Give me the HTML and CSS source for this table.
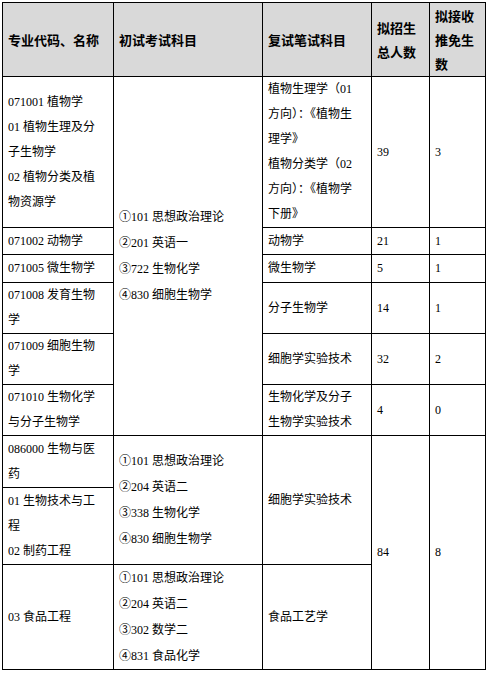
FILE: index.html
```html
<!DOCTYPE html>
<html lang="zh-CN">
<head>
<meta charset="utf-8">
<title>招生目录</title>
<link rel="stylesheet" href="styles.css">
</head>
<body>
<div class="wrap">
<table class="plan">
  <colgroup>
    <col class="c1"><col class="c2"><col class="c3"><col class="c4"><col class="c5">
  </colgroup>
  <thead>
    <tr class="rh">
      <th>专业代码、名称</th>
      <th>初试考试科目</th>
      <th>复试笔试科目</th>
      <th>拟招生<br>总人数</th>
      <th>拟接收<br>推免生<br>数</th>
    </tr>
  </thead>
  <tbody>
    <tr class="r1">
      <td>071001 植物学<br>01 植物生理及分<br>子生物学<br>02 植物分类及植<br>物资源学</td>
      <td rowspan="6" class="exam">①101 思想政治理论<br>②201 英语一<br>③722 生物化学<br>④830 细胞生物学</td>
      <td>植物生理学（01<br>方向）：《植物生<br>理学》<br>植物分类学（02<br>方向）：《植物学<br>下册》</td>
      <td>39</td>
      <td>3</td>
    </tr>
    <tr class="r2">
      <td>071002 动物学</td>
      <td>动物学</td>
      <td>21</td>
      <td>1</td>
    </tr>
    <tr class="r3">
      <td>071005 微生物学</td>
      <td>微生物学</td>
      <td>5</td>
      <td>1</td>
    </tr>
    <tr class="r4">
      <td>071008 发育生物<br>学</td>
      <td>分子生物学</td>
      <td>14</td>
      <td>1</td>
    </tr>
    <tr class="r5">
      <td>071009 细胞生物<br>学</td>
      <td>细胞学实验技术</td>
      <td>32</td>
      <td>2</td>
    </tr>
    <tr class="r6">
      <td>071010 生物化学<br>与分子生物学</td>
      <td>生物化学及分子<br>生物学实验技术</td>
      <td>4</td>
      <td>0</td>
    </tr>
    <tr class="r7">
      <td>086000 生物与医<br>药</td>
      <td rowspan="2" class="exam">①101 思想政治理论<br>②204 英语二<br>③338 生物化学<br>④830 细胞生物学</td>
      <td rowspan="2">细胞学实验技术</td>
      <td rowspan="3">84</td>
      <td rowspan="3">8</td>
    </tr>
    <tr class="r8">
      <td>01 生物技术与工<br>程<br>02 制药工程</td>
    </tr>
    <tr class="r9">
      <td>03 食品工程</td>
      <td class="exam">①101 思想政治理论<br>②204 英语二<br>③302 数学二<br>④831 食品化学</td>
      <td>食品工艺学</td>
    </tr>
  </tbody>
</table>
</div>
</body>
</html>
```
FILE: styles.css
```css
html, body {
  margin: 0;
  padding: 0;
  background: #ffffff;
}
.wrap {
  padding: 2px 0 0 2px;
}
.plan {
  border-collapse: collapse;
  table-layout: fixed;
  width: 484px;
  font-family: "Liberation Serif", "Noto Sans CJK SC", serif;
  font-size: 12px;
  color: #000;
}
.c1 { width: 111px; }
.c2 { width: 149px; }
.c3 { width: 109px; }
.c4 { width: 58px; }
.c5 { width: 56px; }
.plan th, .plan td {
  border: 1px solid #000;
  padding: 0 5px;
  text-align: left;
  vertical-align: middle;
  line-height: 25px;
  white-space: nowrap;
  overflow: hidden;
}
.plan th {
  background: #d9d9d9;
  font-family: "Noto Sans CJK SC", sans-serif;
  font-weight: 700;
  font-size: 13px;
  line-height: 24px;
}
.plan td.exam {
  line-height: 26px;
}
.rh { height: 74px; }
.r1 { height: 150px; }
.r2 { height: 27px; }
.r3 { height: 28px; }
.r4 { height: 50px; }
.r5 { height: 51px; }
.r6 { height: 51px; }
.r7 { height: 52px; }
.r8 { height: 77px; }
.r9 { height: 105px; }
```
